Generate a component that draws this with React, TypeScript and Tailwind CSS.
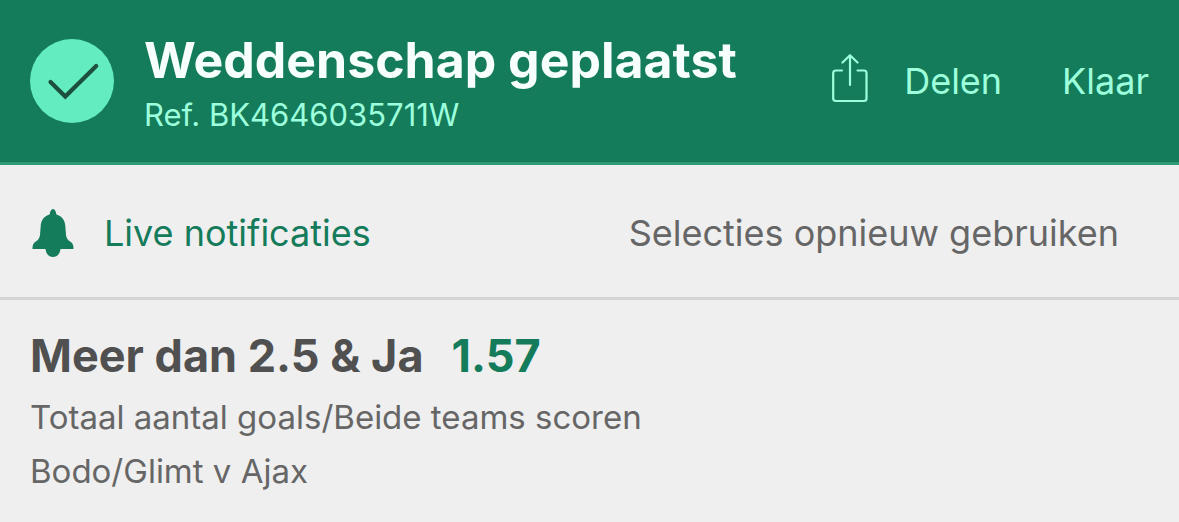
import React from "react";

function CheckBadge() {
  return (
    <svg className="size-[84px] shrink-0" viewBox="0 0 84 84" fill="none" aria-hidden="true">
      <circle cx="42" cy="42" r="42" fill="#63ecc0" />
      <path d="M20.500 43 L35.300 57.500 L66.200 27" stroke="#1d4f3e" strokeWidth="4.200" strokeLinecap="round" />
    </svg>
  );
}

function ShareIcon() {
  return (
    <svg
      className="h-[54px] w-9 shrink-0"
      viewBox="0 0 36 54"
      fill="none"
      stroke="currentColor"
      strokeWidth="2.200"
      strokeLinecap="round"
      strokeLinejoin="round"
      aria-hidden="true"
    >
      <path d="M10 16.500H4Q1.200 16.500 1.200 19V44.500Q1.200 47 4 47H32Q34.500 47 34.500 44.500V19Q34.500 16.500 32 16.500H25.500" />
      <path d="M18 31V1.500M10.500 8.500L18 1.200L25.500 8.500" />
    </svg>
  );
}

function BellIcon() {
  return (
    <svg className="h-12 w-[42px] shrink-0" viewBox="0 0 42 48" fill="currentColor" aria-hidden="true">
      <path d="M21 0C19 0 18 2.500 17.600 5.500C12 7 9 11.500 8.700 17L8 26C7.500 30.500 4.500 32 2.500 33.500C1 35 0.500 36.500 0.500 40H13.500C14 45 17 48 21 48S28 45 28.500 40H41.500C41.500 36.500 41 35 39.500 33.500C37.500 32 34.500 30.500 34 26L33.300 17C33 11.500 30 7 24.400 5.500C24 2.500 23 0 21 0Z" />
    </svg>
  );
}

export default function App() {
  return (
    <main className="min-h-screen bg-[#efefef] font-['Inter',sans-serif] text-[#666666]">
      <header className="flex items-center border-b-3 border-[#2f9a74] bg-[#147b5b] px-[30px] py-8 text-[#9dffdc]">
        <CheckBadge />
        <div className="ml-[30px] grow">
          <h1 className="text-[50px] leading-[56px] font-bold text-[#f6fffc]">Weddenschap geplaatst</h1>
          <p className="mt-3 text-[31px] leading-[30px]">Ref. BK4646035711W</p>
        </div>
        <button type="button" className="flex items-center gap-9 text-4xl">
          <ShareIcon />
          Delen
        </button>
        <button type="button" className="ml-[60px] text-4xl">Klaar</button>
      </header>
      <div className="flex items-center justify-between border-b-3 border-[#d4d4d4] pt-11 pr-[60px] pb-10 pl-8 text-4xl">
        <button type="button" className="flex items-center gap-[30px] text-[#147b5b]">
          <BellIcon />
          Live notificaties
        </button>
        <button type="button">Selecties opnieuw gebruiken</button>
      </div>
      <section className="px-[30px] pt-[30px]">
        <h2 className="flex gap-7 text-[45px] leading-[52px] font-bold text-[#505050]">
          <span>Meer dan 2.5 &amp; Ja</span>
          <span className="text-[#147b5b]">1.57</span>
        </h2>
        <p className="mt-2 text-[33px] leading-[54px]">Totaal aantal goals/Beide teams scoren</p>
        <p className="text-[33px] leading-[54px]">Bodo/Glimt v Ajax</p>
      </section>
    </main>
  );
}
